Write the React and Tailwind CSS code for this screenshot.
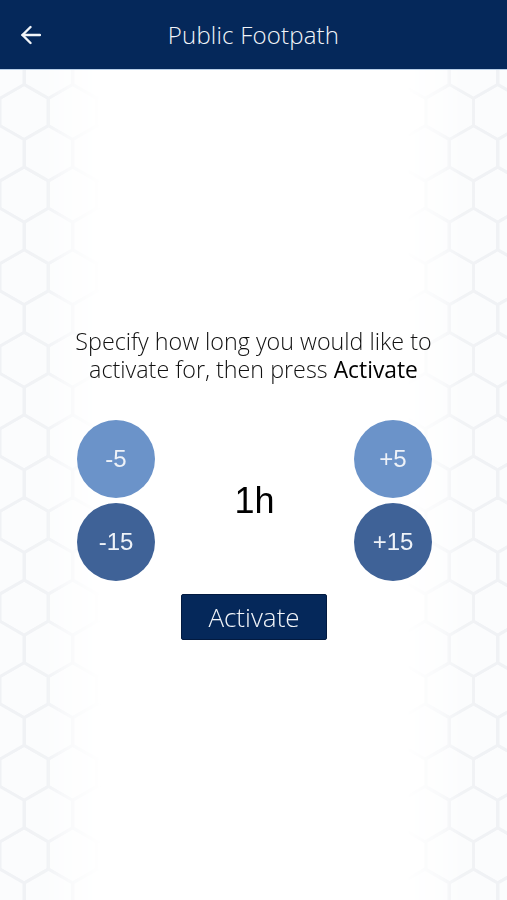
import React from 'react';

const hexPath = 'M24 0 L48 13.8 L48 41.4 L24 55.2 L0 41.4 L0 13.8 Z';

function HexBackground() {
  const rowsA = [];
  const rowsB = [];
  for (let i = -1; i < 11; i++) {
    rowsA.push(112 + 82.6 * i);
    rowsB.push(153.3 + 82.6 * i);
  }
  const colsA = [24, 72.5, 450, 497.5];
  const colsB = [0, 48.5, 97, 425, 473.5, 522];

  const cell = (cx, cy) => (
    <path key={`${cx}-${cy}`} d={hexPath} transform={`translate(${cx - 24} ${cy - 27.6})`} />
  );

  return (
    <svg className="absolute inset-0 w-full h-full" viewBox="0 0 507 830" preserveAspectRatio="none">
      <defs>
        <linearGradient id="fade" x1="0" y1="0" x2="1" y2="0">
          <stop offset="0" stopColor="#fff" />
          <stop offset="0.09" stopColor="#fff" stopOpacity="0.95" />
          <stop offset="0.13" stopColor="#fff" stopOpacity="0.45" />
          <stop offset="0.2" stopColor="#fff" stopOpacity="0" />
          <stop offset="0.8" stopColor="#fff" stopOpacity="0" />
          <stop offset="0.87" stopColor="#fff" stopOpacity="0.45" />
          <stop offset="0.91" stopColor="#fff" stopOpacity="0.95" />
          <stop offset="1" stopColor="#fff" />
        </linearGradient>
        <mask id="fadeMask" maskUnits="userSpaceOnUse" x="0" y="0" width="507" height="830">
          <rect x="0" y="0" width="507" height="830" fill="url(#fade)" />
        </mask>
      </defs>
      <g mask="url(#fadeMask)">
        <g transform="translate(0 -70)" fill="#fbfcfd" stroke="#f0f2f5" strokeWidth="3">
          {rowsA.flatMap((y) => colsA.map((x) => cell(x, y)))}
          {rowsB.flatMap((y) => colsB.map((x) => cell(x, y)))}
        </g>
      </g>
    </svg>
  );
}

function StepButton({ label, dark }) {
  return (
    <button
      className={`w-[78px] h-[78px] rounded-full flex items-center justify-center text-[#eef2f8] text-[24px] font-['Liberation_Sans',sans-serif] ${
        dark ? 'bg-[#3f6297]' : 'bg-[#6b93c9]'
      }`}
    >
      {label}
    </button>
  );
}

export default function App() {
  return (
    <div className="w-[507px] h-[900px] flex flex-col bg-white overflow-hidden font-['Open_Sans',sans-serif]">
      <header className="h-[70px] shrink-0 flex items-center bg-[#05285a] border-b border-[#b9cfe8] relative">
        <button className="absolute left-[21px] top-[25px]">
          <svg className="block w-[20px] h-[20px]" viewBox="0 0 20 20" fill="none" stroke="#f2f5f9" strokeWidth="2.4" strokeLinecap="round" strokeLinejoin="round">
            <path d="M1.5 10H19" />
            <path d="M9.5 2L1.5 10L9.5 18" />
          </svg>
        </button>
        <h1 className="w-full text-center text-[24px] font-light text-[#f2f5f9] tracking-[0.2px]">Public Footpath</h1>
      </header>

      <main className="relative flex-1 flex flex-col items-center">
        <HexBackground />
        <div className="relative flex flex-col items-center pt-[257px] w-full">
          <p className="text-[23.3px] leading-[28px] font-light text-[#111111] text-center whitespace-nowrap">
            Specify how long you would like to
            <br />
            activate for, then press <span className="text-[22.8px] font-normal text-black">Activate</span>
          </p>
          <div className="w-full pl-[77px] pr-[75px] mt-[36px] flex items-center justify-between">
            <div className="flex flex-col gap-[5px]">
              <StepButton label="-5" />
              <StepButton label="-15" dark />
            </div>
            <span className="text-[36px] text-black font-['Liberation_Sans',sans-serif]">1h</span>
            <div className="flex flex-col gap-[5px]">
              <StepButton label="+5" />
              <StepButton label="+15" dark />
            </div>
          </div>
          <button className="mt-[13px] ml-[1px] w-[146px] h-[46px] bg-[#05285a] border border-[#021a40] rounded-[2px] text-[26px] font-light text-[#f2f5f9]">
            Activate
          </button>
        </div>
      </main>
    </div>
  );
}
